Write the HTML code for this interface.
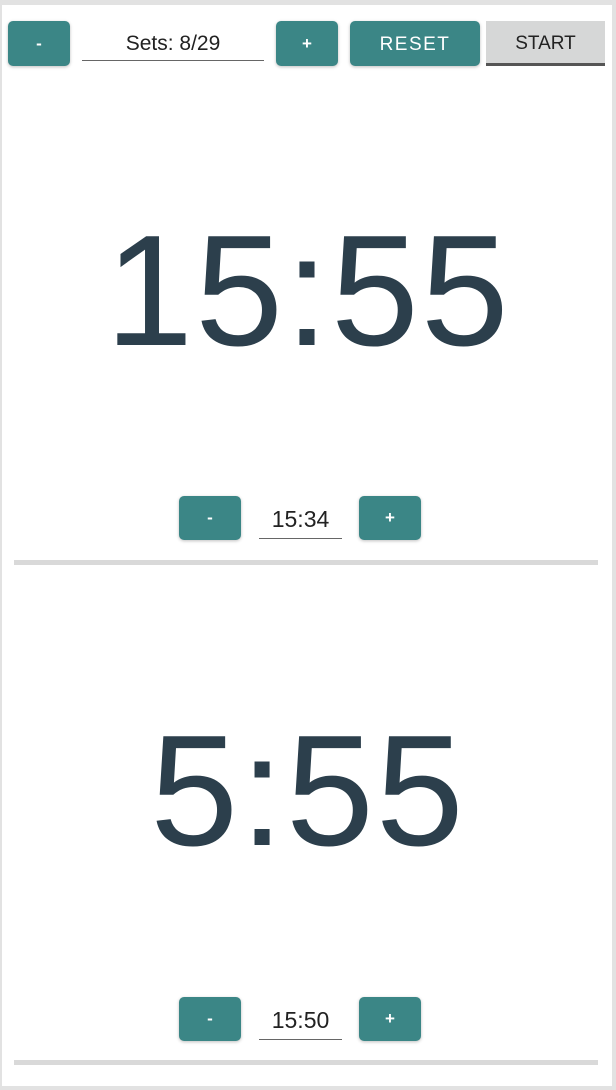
<!DOCTYPE html>
<html><head><style>
html,body{margin:0;padding:0}
body{width:616px;height:1090px;position:relative;background:#e2e2e2;font-family:"Liberation Sans",sans-serif;overflow:hidden}
.page{position:absolute;left:2px;top:5px;width:610px;height:1081px;background:#fff}
.b{position:absolute;background:#3b8686;color:#fff;border-radius:5px;box-shadow:0 1px 3px rgba(0,0,0,.25);display:flex;align-items:center;justify-content:center;font-size:17px;font-weight:bold}
.inp{position:absolute;border-bottom:1.5px solid #666;text-align:center;color:#222;font-size:21px}
.big{position:absolute;left:0;width:616px;text-align:center;color:#2c3f4c;font-size:158px;letter-spacing:2px;line-height:1}
.sep{position:absolute;left:14px;width:584px;height:5px;background:#d9d9d9}
</style></head><body>
<div class="page"></div>
<div class="b" style="left:8px;top:21px;width:62px;height:45px">-</div>
<div class="inp" style="left:82px;top:32px;width:182px;height:28px">Sets: 8/29</div>
<div class="b" style="left:276px;top:21px;width:62px;height:45px">+</div>
<div class="b" style="left:350px;top:21px;width:130px;height:45px;font-weight:normal;letter-spacing:1.5px;font-size:19px;padding-top:2px;box-sizing:border-box">RESET</div>
<div style="position:absolute;left:486px;top:21px;width:119px;height:45px;background:#d6d7d7;border-bottom:3px solid #555;display:flex;align-items:center;justify-content:center;font-size:19px;color:#222;padding-top:3px;box-sizing:border-box">START</div>
<div class="big" style="top:212px">15:55</div>
<div class="b" style="left:179px;top:496px;width:62px;height:44px">-</div>
<div class="inp" style="left:259px;top:506px;width:83px;height:32px;font-size:23px">15:34</div>
<div class="b" style="left:359px;top:496px;width:62px;height:44px">+</div>
<div class="sep" style="top:560px"></div>
<div class="big" style="top:712px">5:55</div>
<div class="b" style="left:179px;top:997px;width:62px;height:44px">-</div>
<div class="inp" style="left:259px;top:1007px;width:83px;height:32px;font-size:23px">15:50</div>
<div class="b" style="left:359px;top:997px;width:62px;height:44px">+</div>
<div class="sep" style="top:1060px"></div>
</body></html>
